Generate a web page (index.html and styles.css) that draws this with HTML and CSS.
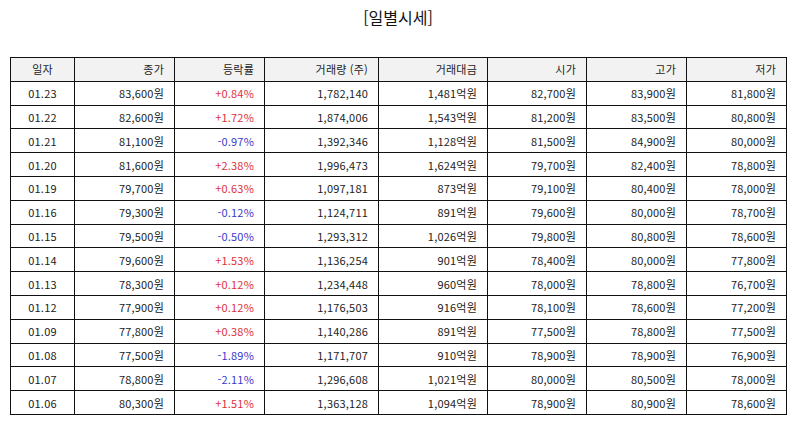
FILE: index.html
```html
<!DOCTYPE html>
<html lang="ko">
<head>
<meta charset="utf-8">
<title>일별시세</title>
<link rel="stylesheet" href="styles.css">
</head>
<body>
<div class="page">
  <h1 class="title">[일별시세]</h1>
  <table class="prices">
    <colgroup>
      <col class="c-date"><col class="c-close"><col class="c-rate"><col class="c-vol"><col class="c-amt"><col class="c-open"><col class="c-high"><col class="c-low">
    </colgroup>
    <thead>
      <tr><th class="center">일자</th><th>종가</th><th>등락률</th><th>거래량 (주)</th><th>거래대금</th><th>시가</th><th>고가</th><th>저가</th></tr>
    </thead>
    <tbody>
      <tr><td class="center">01.23</td><td>83,600원</td><td class="up">+0.84%</td><td>1,782,140</td><td>1,481억원</td><td>82,700원</td><td>83,900원</td><td>81,800원</td></tr>
      <tr><td class="center">01.22</td><td>82,600원</td><td class="up">+1.72%</td><td>1,874,006</td><td>1,543억원</td><td>81,200원</td><td>83,500원</td><td>80,800원</td></tr>
      <tr><td class="center">01.21</td><td>81,100원</td><td class="down">-0.97%</td><td>1,392,346</td><td>1,128억원</td><td>81,500원</td><td>84,900원</td><td>80,000원</td></tr>
      <tr><td class="center">01.20</td><td>81,600원</td><td class="up">+2.38%</td><td>1,996,473</td><td>1,624억원</td><td>79,700원</td><td>82,400원</td><td>78,800원</td></tr>
      <tr><td class="center">01.19</td><td>79,700원</td><td class="up">+0.63%</td><td>1,097,181</td><td>873억원</td><td>79,100원</td><td>80,400원</td><td>78,000원</td></tr>
      <tr><td class="center">01.16</td><td>79,300원</td><td class="down">-0.12%</td><td>1,124,711</td><td>891억원</td><td>79,600원</td><td>80,000원</td><td>78,700원</td></tr>
      <tr><td class="center">01.15</td><td>79,500원</td><td class="down">-0.50%</td><td>1,293,312</td><td>1,026억원</td><td>79,800원</td><td>80,800원</td><td>78,600원</td></tr>
      <tr><td class="center">01.14</td><td>79,600원</td><td class="up">+1.53%</td><td>1,136,254</td><td>901억원</td><td>78,400원</td><td>80,000원</td><td>77,800원</td></tr>
      <tr><td class="center">01.13</td><td>78,300원</td><td class="up">+0.12%</td><td>1,234,448</td><td>960억원</td><td>78,000원</td><td>78,800원</td><td>76,700원</td></tr>
      <tr><td class="center">01.12</td><td>77,900원</td><td class="up">+0.12%</td><td>1,176,503</td><td>916억원</td><td>78,100원</td><td>78,600원</td><td>77,200원</td></tr>
      <tr><td class="center">01.09</td><td>77,800원</td><td class="up">+0.38%</td><td>1,140,286</td><td>891억원</td><td>77,500원</td><td>78,800원</td><td>77,500원</td></tr>
      <tr><td class="center">01.08</td><td>77,500원</td><td class="down">-1.89%</td><td>1,171,707</td><td>910억원</td><td>78,900원</td><td>78,900원</td><td>76,900원</td></tr>
      <tr><td class="center">01.07</td><td>78,800원</td><td class="down">-2.11%</td><td>1,296,608</td><td>1,021억원</td><td>80,000원</td><td>80,500원</td><td>78,000원</td></tr>
      <tr><td class="center">01.06</td><td>80,300원</td><td class="up">+1.51%</td><td>1,363,128</td><td>1,094억원</td><td>78,900원</td><td>80,900원</td><td>78,600원</td></tr>
    </tbody>
  </table>
</div>
</body>
</html>
```

FILE: styles.css
```css
html, body {
  margin: 0;
  padding: 0;
  background: #ffffff;
}
body {
  font-family: "Noto Sans CJK KR", "Noto Sans", sans-serif;
  color: #222222;
}
.page {
  padding: 6px 8px 0 10px;
}
.title {
  margin: 0;
  height: 51px;
  font-size: 16px;
  font-weight: 400;
  line-height: 22px;
  text-align: center;
  color: #111111;
}
.prices {
  width: 776px;
  border-collapse: collapse;
  table-layout: fixed;
  font-size: 11px;
  letter-spacing: 0.2px;
}
.c-date { width: 64px; }
.c-close { width: 100px; }
.c-rate { width: 90px; }
.c-vol { width: 114px; }
.c-amt { width: 109px; }
.c-open { width: 99px; }
.c-high { width: 100px; }
.c-low { width: 100px; }
.prices th,
.prices td {
  border: 1px solid #111111;
  height: 22.8px;
  padding: 0 10px 0 4px;
  text-align: right;
  font-weight: 400;
  line-height: 14px;
  white-space: nowrap;
}
.prices th {
  background: #f2f2f2;
  color: #222222;
}
.prices .center {
  text-align: center;
  padding: 0;
}
.up { color: #e0303c; }
.down { color: #3a3acc; }
```
